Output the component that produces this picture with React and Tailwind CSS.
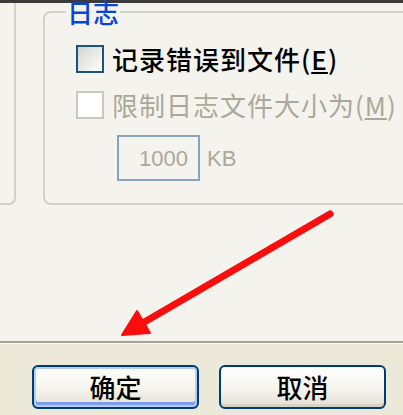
import React from "react";

const cjk = "font-['Noto_Sans_CJK_SC',sans-serif]";

const Checkbox = ({ disabled }) => (
  <div
    className={
      disabled
        ? "w-[28px] h-[28px] shrink-0 border-2 border-[#cac8bb] bg-white"
        : "w-[28px] h-[28px] shrink-0 border-2 border-[#1c5180] bg-linear-to-br from-[#d4d4ce] to-white"
    }
  />
);

const XpButton = ({ label, isDefault }) => (
  <button
    className={`w-[167px] h-[44px] rounded-[6px] border-2 border-[#003c74] bg-linear-to-b from-white via-[#f6f5f0] to-[#e3e0d3] text-[26px] leading-none font-medium text-black ${cjk} ${
      isDefault
        ? "shadow-[inset_0_0_0_2px_#b3cdf3,inset_0_-3px_0_2px_#7d9ee6]"
        : "shadow-[inset_0_-3px_0_#d8d2c4]"
    }`}
  >
    {label}
  </button>
);

const App = () => {
  return (
    <div className="relative w-[403px] h-[415px] overflow-hidden flex flex-col bg-[#ece9d8]">
      <div className="h-[3px] shrink-0 bg-[#3b3b3b]" />

      {/* tab page */}
      <div className="h-[340px] shrink-0 flex bg-[#f4f3ee] border-b-2 border-[#a3a298]">
        <div className="w-[16px] h-[202px] shrink-0 border-r-2 border-b-2 rounded-br-[7px] border-[#d3d2c6]" />

        <fieldset className="ml-[27px] mt-[-2px] w-[390px] h-[204px] shrink-0 border-2 border-[#d3d2c6] rounded-[8px] px-0">
          <legend className={`ml-[21px] px-[1px] text-[26px] leading-[22px] font-medium text-[#0a46d5] ${cjk}`}>
            日志
          </legend>

          <div className="pl-[31px] pt-[22px] flex flex-col">
            <div className="flex items-center gap-[8px] h-[28px]">
              <Checkbox />
              <span className={`text-[26px] leading-none tracking-[1px] font-medium text-black ${cjk}`}>
                记录错误到文件(<span className="underline">E</span>)
              </span>
            </div>

            <div className="flex items-center gap-[8px] h-[28px] mt-[18px]">
              <Checkbox disabled />
              <span className={`text-[26px] leading-none tracking-[1px] text-[#aca899] whitespace-nowrap ${cjk}`}>
                限制日志文件大小为(<span className="underline">M</span>)
              </span>
            </div>

            <div className="flex items-center gap-[7px] mt-[16px] ml-[41px]">
              <div className="w-[83px] h-[46px] border-2 border-[#86a2c0] flex items-center justify-end pr-[10px] text-[22px] text-[#aca899] font-['Liberation_Sans',sans-serif]">
                1000
              </div>
              <span className="text-[22px] text-[#aca899] font-['Liberation_Sans',sans-serif]">KB</span>
            </div>
          </div>
        </fieldset>
      </div>
      <div className="h-[1px] shrink-0 bg-[#fbfaf6]" />

      {/* buttons */}
      <div className="flex gap-[20px] pl-[32px] pt-[21px]">
        <XpButton label="确定" isDefault />
        <XpButton label="取消" />
      </div>

      {/* annotation arrow */}
      <svg className="absolute inset-0 pointer-events-none" width="403" height="415" viewBox="0 0 403 415">
        <line x1="330" y1="214" x2="141" y2="324" stroke="#fb0d0d" strokeWidth="7" strokeLinecap="round" />
        <polygon points="122,335 137,311 150,333" fill="#fb0d0d" stroke="#fb0d0d" strokeWidth="2" strokeLinejoin="round" />
      </svg>
    </div>
  );
};

export default App;
